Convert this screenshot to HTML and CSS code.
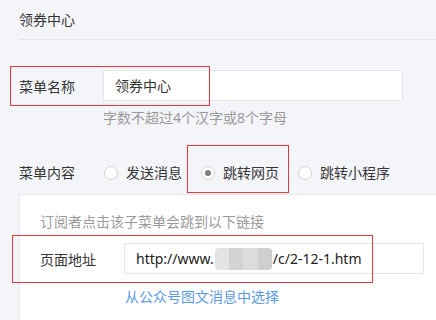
FILE: index.html
```html
<!DOCTYPE html>
<html lang="zh-CN">
<head>
    <meta charset="UTF-8">
    <meta name="viewport" content="width=device-width, initial-scale=1.0">
    <title>菜单设置</title>
    <link rel="stylesheet" href="styles.css">
</head>
<body>
    <div class="page">
        <div class="title">领券中心</div>

        <div class="form-row name-row">
            <span class="label">菜单名称</span>
            <div class="input">领券中心</div>
            <div class="mark mark-name"></div>
        </div>
        <p class="hint">字数不超过4个汉字或8个字母</p>

        <div class="form-row radio-row">
            <span class="label">菜单内容</span>
            <label class="radio"><i class="dot"></i>发送消息</label>
            <label class="radio checked"><i class="dot"></i>跳转网页<span class="mark mark-radio"></span></label>
            <label class="radio"><i class="dot"></i>跳转小程序</label>
        </div>

        <div class="panel">
            <p class="panel-tip">订阅者点击该子菜单会跳到以下链接</p>
            <div class="form-row url-row">
                <span class="label">页面地址</span>
                <div class="input url">http://www.<span class="blur"><b></b><b></b><b></b><b></b></span>/c/2-12-1.htm</div>
                <div class="mark mark-url"></div>
            </div>
            <a class="link" href="#">从公众号图文消息中选择</a>
        </div>
    </div>
</body>
</html>
```

FILE: styles.css
```css
body {
    margin: 0;
    background-color: #f4f5f9; /* light grey page */
    font-family: "Noto Sans", "Noto Sans CJK SC", sans-serif;
    font-size: 14px;
    color: #353535;
    overflow: hidden;
}
p {
    margin: 0;
}
.page {
    padding-left: 19px;
}
.title {
    height: 39px;
    line-height: 39px;
    border-bottom: 1px solid #e4e6eb;
}
.form-row {
    position: relative;
    display: flex;
    align-items: center;
}
.label {
    width: 84px;
    flex-shrink: 0;
}
.input {
    box-sizing: border-box;
    width: 300px;
    flex-shrink: 0;
    height: 31px;
    line-height: 29px;
    padding-left: 11px;
    background-color: #ffffff;
    border: 1px solid #e4e6eb;
}
.name-row {
    margin-top: 30px;
}
.hint {
    margin: 7px 0 0 84px;
    line-height: 20px;
    color: #9a9a9a;
}
.radio-row {
    margin-top: 35px;
    line-height: 20px;
}
.radio {
    position: relative;
    display: flex;
    align-items: center;
    margin-left: 1px;
    margin-right: 18px;
}
.dot {
    box-sizing: border-box;
    width: 14px;
    height: 14px;
    margin-right: 8px;
    border: 1px solid #d4d4d4;
    border-radius: 50%;
    background-color: #ffffff;
    position: relative;
}
.checked .dot::after {
    content: "";
    position: absolute;
    left: 3px;
    top: 3px;
    width: 6px;
    height: 6px;
    border-radius: 50%;
    background-color: #7f7f7f;
}
.panel {
    margin-top: 11px;
    height: 108px;
    padding: 17px 0 0 20px;
    background-color: #ffffff;
    border: 1px solid #e6e7eb;
    border-right: none;
    border-bottom: none;
}
.panel-tip {
    line-height: 20px;
    color: #9a9a9a;
}
.url-row {
    margin-top: 11px;
}
.url {
    color: #222222;
    white-space: nowrap;
}
.blur {
    display: inline-flex;
    vertical-align: -6px;
    height: 22px;
    width: 57px;
    margin: 0 1px;
    border-radius: 4px;
    overflow: hidden;
}
.blur b {
    flex: 1;
    background-color: #e4e4e4;
}
.blur b:nth-child(2) { background-color: #d3d3d3; }
.blur b:nth-child(3) { background-color: #dcdcdc; }
.blur b:nth-child(4) { background-color: #cfcfcf; }
.link {
    display: block;
    margin: 13px 0 0 85px;
    line-height: 20px;
    color: #5b9be6;
    text-decoration: none;
}
/* red annotation boxes over the form */
.mark {
    position: absolute;
    border: 1px solid #e8383d;
    box-sizing: border-box;
}
.mark-name {
    left: -9px;
    top: -4px;
    width: 200px;
    height: 40px;
}
.mark-radio {
    left: -14px;
    top: -18px;
    width: 102px;
    height: 48px;
}
.mark-url {
    left: -28px;
    top: -8px;
    width: 361px;
    height: 48px;
}
```
